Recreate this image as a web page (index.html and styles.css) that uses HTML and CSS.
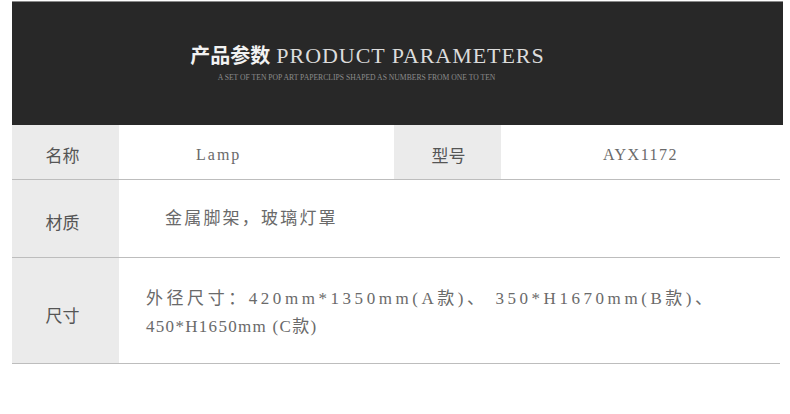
FILE: index.html
```html
<!DOCTYPE html>
<html lang="zh">
<head>
<meta charset="utf-8">
<link rel="stylesheet" href="styles.css">
</head>
<body>
<div class="page">
  <header class="banner">
    <h1 class="title"><span class="title-cn">产品参数</span><span class="title-en">PRODUCT PARAMETERS</span></h1>
    <p class="subtitle">A SET OF TEN POP ART PAPERCLIPS SHAPED AS NUMBERS FROM ONE TO TEN</p>
  </header>
  <div class="table">
    <div class="row row-name">
      <div class="label">名称</div>
      <div class="value value-lamp">Lamp</div>
      <div class="label label-model">型号</div>
      <div class="value value-model">AYX1172</div>
    </div>
    <div class="row row-material">
      <div class="label">材质</div>
      <div class="value value-material">金属脚架，玻璃灯罩</div>
    </div>
    <div class="row row-size">
      <div class="label">尺寸</div>
      <div class="value value-size">
        <div class="size-line1">外径尺寸：420mm*1350mm(A款)、 350*H1670mm(B款)、</div>
        <div class="size-line2">450*H1650mm (C款)</div>
      </div>
    </div>
  </div>
</div>
</body>
</html>
```
FILE: styles.css
```css
html, body {
  margin: 0;
  padding: 0;
  background: #fff;
}
.page {
  padding: 1px 0 0 12px;
  width: 771px;
}
.banner {
  background: #282828;
  border-top: 1px solid #8a8a8a;
  height: 124px;
  box-sizing: border-box;
  display: flex;
  flex-direction: column;
  align-items: center;
  padding-top: 40px;
  padding-right: 60px;
}
.title {
  margin: 0;
  display: flex;
  align-items: baseline;
  font-weight: normal;
  line-height: 26px;
}
.title-cn {
  font-family: "Noto Sans CJK SC", sans-serif;
  font-weight: 700;
  font-size: 20px;
  color: #f2f2f2;
  margin-right: 6px;
}
.title-en {
  font-family: "Liberation Serif", serif;
  font-size: 22px;
  color: #dcdcdc;
  letter-spacing: 0.95px;
}
.subtitle {
  margin: 4px 0 0 0;
  padding-right: 22px;
  font-family: "Liberation Serif", serif;
  font-size: 7.65px;
  color: #8c8c8c;
  letter-spacing: 0;
}
.table {
  width: 768px;
  font-family: "Liberation Serif", "Noto Sans CJK SC", serif;
}
.row {
  display: flex;
  border-bottom: 1px solid #bdbdbd;
}
.row-name { height: 54px; }
.row-material { height: 77px; }
.row-size { height: 105px; }
.label {
  width: 107px;
  flex: none;
  background: #ebebeb;
  display: flex;
  align-items: center;
  justify-content: center;
  font-family: "Noto Sans CJK SC", sans-serif;
  font-size: 17px;
  color: #555;
  padding-right: 6px;
  box-sizing: border-box;
}
.row-name .label { padding-top: 4px; }
.row-material .label { padding-top: 5px; }
.row-size .label { padding-top: 7px; }
.value {
  display: flex;
  align-items: center;
  color: #6a6a6a;
  font-size: 16px;
}
.row-name .value { padding-top: 6px; }
.value-lamp {
  width: 275px;
  padding-left: 77px;
  box-sizing: border-box;
  letter-spacing: 2px;
}
.label-model {
  padding-right: 0;
  padding-left: 2px;
}
.value-model {
  flex: 1;
  justify-content: center;
  letter-spacing: 1.5px;
}
.value-material {
  padding-left: 46px;
  padding-bottom: 5px;
  font-family: "Noto Sans CJK SC", sans-serif;
  font-size: 17px;
  color: #6a6a6a;
  letter-spacing: 2.2px;
}
.value-size {
  flex-direction: column;
  align-items: flex-start;
  justify-content: center;
  padding-left: 27px;
  padding-top: 4px;
  font-size: 17px;
  line-height: 28px;
}
.size-line1 {
  letter-spacing: 3.55px;
}
.size-line2 {
  letter-spacing: 1.3px;
}
```
